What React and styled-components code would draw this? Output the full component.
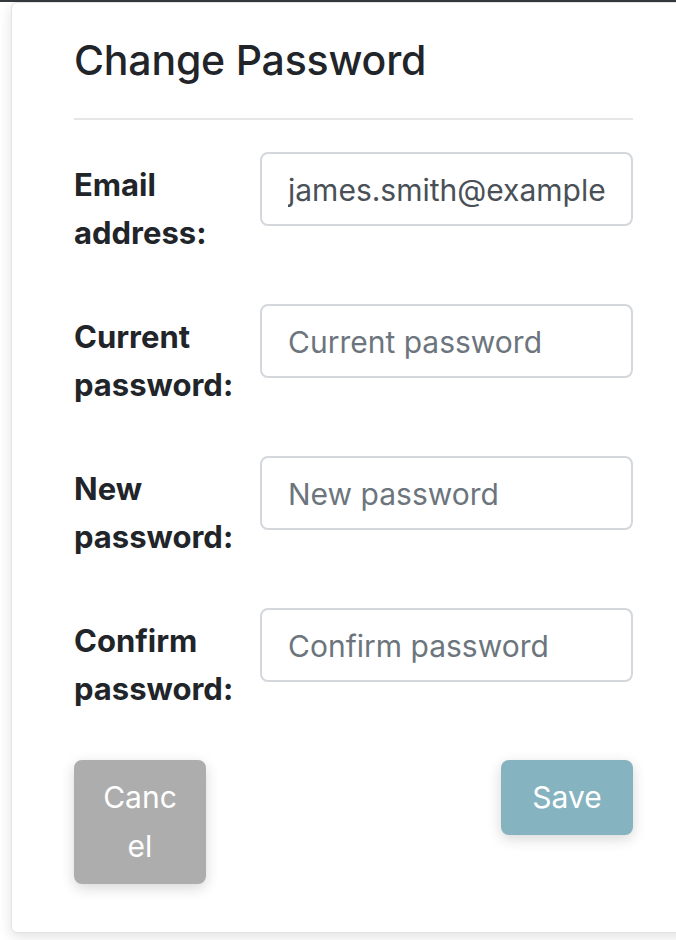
import React from "react";
import styled, { createGlobalStyle } from "styled-components";

const GlobalStyle = createGlobalStyle`
  html, body {
    margin: 0;
    padding: 0;
    background: #ffffff;
    overflow: hidden;
  }
  body {
    font-family: Inter, "Liberation Sans", Arial, sans-serif;
    color: #212529;
  }
`;

const TopBar = styled.div`
  height: 2px;
  background: #343a40;
`;

const Page = styled.div`
  padding: 0 0 0 12px;
  height: 938px;
`;

const Card = styled.div`
  width: 683px;
  box-sizing: border-box;
  padding: 31px 62px 48px;
  background: #fff;
  border: 1px solid #e3e3e3;
  border-radius: 6px;
  box-shadow: 0 4px 14px rgba(0, 0, 0, 0.12);
  margin-left: -1px;
`;

const Title = styled.h2`
  margin: 0;
  font-size: 41px;
  font-weight: 500;
  line-height: 52px;
  color: #212529;
  letter-spacing: -0.2px;
`;

const Divider = styled.hr`
  margin: 32px 0 32px;
  border: 0;
  border-top: 2px solid #e6e6e6;
  width: 559px;
`;

const Form = styled.form`
  display: flex;
  flex-direction: column;
  gap: 47px;
  width: 559px;
`;

const Row = styled.div`
  display: grid;
  grid-template-columns: 186px 1fr;
  align-items: start;
`;

const Label = styled.label`
  padding-top: 9px;
  font-size: 31px;
  font-weight: 700;
  line-height: 48px;
  color: #212529;
  width: 175px;
`;

const Input = styled.input`
  box-sizing: border-box;
  width: 100%;
  height: 74px;
  padding: 2px 26px 0;
  border: 2px solid #d4d8dc;
  border-radius: 8px;
  font-family: Inter, "Liberation Sans", Arial, sans-serif;
  font-size: 30px;
  color: #495057;
  background: #fff;
  outline: none;

  &::placeholder {
    color: #6c757d;
  }
`;

const Actions = styled.div`
  display: flex;
  justify-content: space-between;
  align-items: flex-start;
  margin-top: 47px;
  width: 559px;
`;

const Button = styled.button`
  box-sizing: border-box;
  width: 132px;
  padding: 13px 26px;
  border: none;
  border-radius: 8px;
  background: ${(p) => p.$bg};
  color: #fff;
  font-family: Inter, "Liberation Sans", Arial, sans-serif;
  font-size: 30px;
  line-height: 49px;
  text-align: center;
  box-shadow: 0 4px 14px rgba(0, 0, 0, 0.16);
  word-break: break-all;
`;

const fields = [
  { label: "Email address:", value: "james.smith@example.com", type: "email" },
  { label: "Current password:", placeholder: "Current password", type: "password" },
  { label: "New password:", placeholder: "New password", type: "password" },
  { label: "Confirm password:", placeholder: "Confirm password", type: "password" },
];

export default function App() {
  return (
    <>
      <GlobalStyle />
      <TopBar />
      <Page>
        <Card>
          <Title>Change Password</Title>
          <Divider />
          <Form onSubmit={(e) => e.preventDefault()}>
            {fields.map((f, i) => (
              <Row key={i}>
                <Label htmlFor={`f${i}`}>{f.label}</Label>
                <Input
                  id={`f${i}`}
                  type={f.type}
                  defaultValue={f.value}
                  placeholder={f.placeholder}
                  readOnly={!!f.value}
                />
              </Row>
            ))}
          </Form>
          <Actions>
            <Button $bg="#adadae" type="button">Cancel</Button>
            <Button $bg="#86b3c0" type="button">Save</Button>
          </Actions>
        </Card>
      </Page>
    </>
  );
}
